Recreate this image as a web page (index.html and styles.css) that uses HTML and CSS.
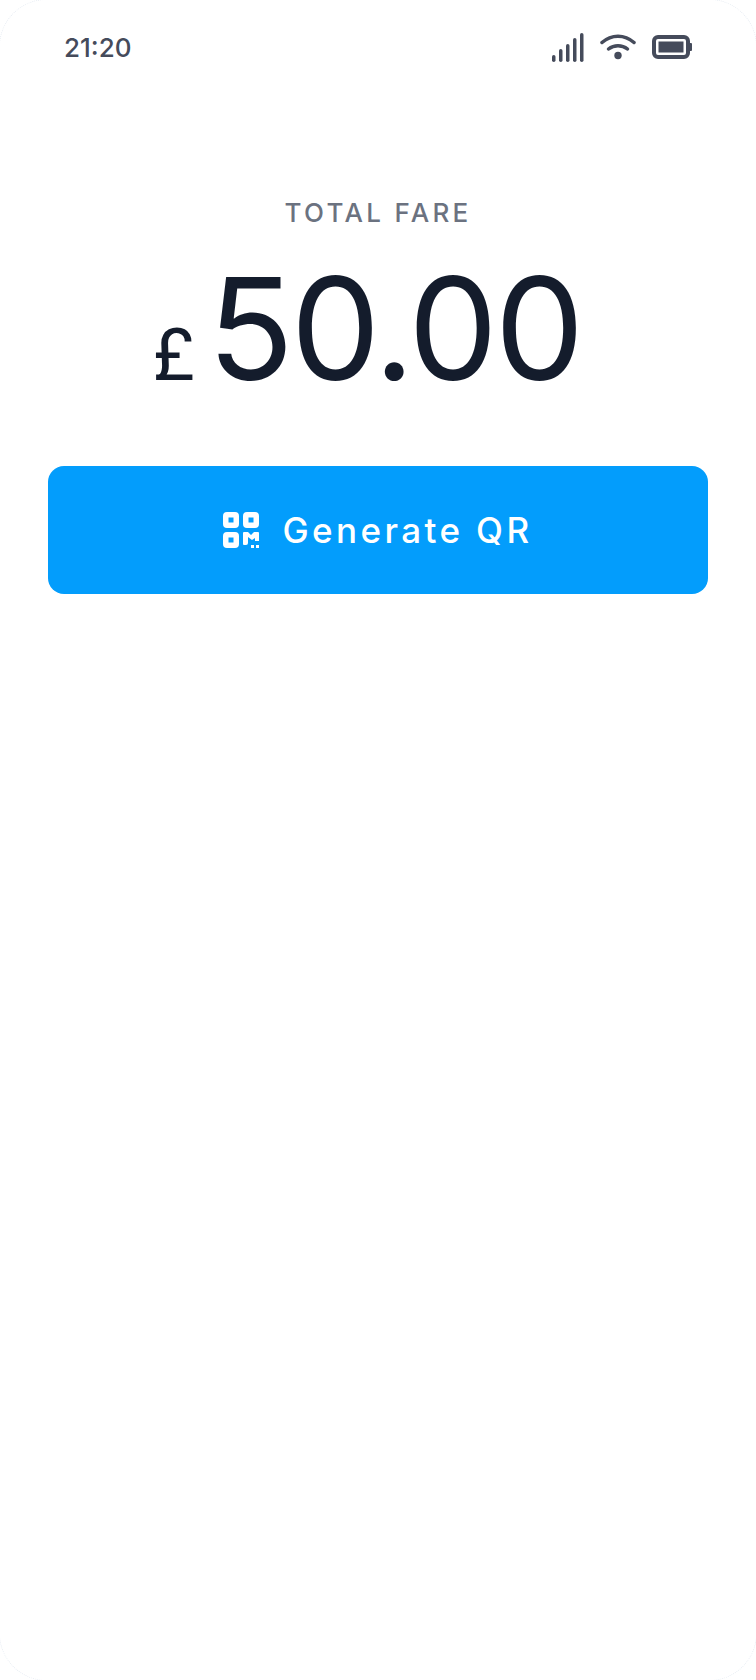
FILE: index.html
```html
<!DOCTYPE html>
<html lang="en">
<head>
  <meta charset="UTF-8" />
  <meta name="viewport" content="width=device-width, initial-scale=1.0"/>
  <title>Total Fare</title>
  <link rel="stylesheet" href="styles.css">
</head>
<body>

  <div class="phone">
    <div class="status-bar">
      <span class="status-time">21:20</span>
      <div class="status-icons">
        <svg class="icon-signal" width="32" height="30" viewBox="0 0 32 30">
          <rect x="0" y="23" width="3.500" height="7" rx="1.750"/>
          <rect x="7" y="17" width="3.500" height="13" rx="1.750"/>
          <rect x="14" y="12" width="3.500" height="18" rx="1.750"/>
          <rect x="21" y="6" width="3.500" height="24" rx="1.750"/>
          <rect x="28" y="1" width="3.500" height="29" rx="1.750"/>
        </svg>
        <svg class="icon-wifi" width="36" height="26" viewBox="0 0 36 26">
          <path d="M2 8.5C11.5 0 24.5 0 34 8.5"/>
          <path d="M8.5 15C14 10.5 22 10.5 27.5 15"/>
          <circle cx="18" cy="21.5" r="3.7"/>
        </svg>
        <svg class="icon-battery" width="40" height="24" viewBox="0 0 40 24">
          <rect x="2" y="2" width="34" height="20" rx="4"/>
          <rect class="battery-level" x="6.5" y="6.5" width="25" height="11"/>
          <path class="battery-tip" d="M37.5 8h1.5a1 1 0 0 1 1 1v6a1 1 0 0 1-1 1h-1.5z"/>
        </svg>
      </div>
    </div>

    <div class="fare">
      <div class="fare-label">TOTAL FARE</div>
      <div class="fare-amount">
        <span class="fare-currency">£</span>
        <span class="fare-value">50.00</span>
      </div>
    </div>

    <button class="qr-button">
      <svg width="36" height="36" viewBox="0 0 36 36">
        <path fill-rule="evenodd" d="M4 0h8a4 4 0 0 1 4 4v8a4 4 0 0 1-4 4H4a4 4 0 0 1-4-4V4a4 4 0 0 1 4-4zm1.5 5.500v5h5v-5z"/>
        <path fill-rule="evenodd" d="M24 0h8a4 4 0 0 1 4 4v8a4 4 0 0 1-4 4h-8a4 4 0 0 1-4-4V4a4 4 0 0 1 4-4zm1.500 5.500v5h5v-5z"/>
        <path fill-rule="evenodd" d="M4 20h8a4 4 0 0 1 4 4v8a4 4 0 0 1-4 4H4a4 4 0 0 1-4-4v-8a4 4 0 0 1 4-4zm1.500 5.500v5h5v-5z"/>
        <path d="M21 20h4l3 3 3-3h4a1 1 0 0 1 1 1v8h-4v-3l-3 2-4-3v6a2 2 0 0 1-2 2h-2a1 1 0 0 1-1-1V21a1 1 0 0 1 1-1z"/>
        <rect x="28" y="33" width="3" height="3"/>
        <rect x="33" y="33" width="3" height="3"/>
      </svg>
      <span>Generate QR</span>
    </button>
  </div>

</body>
</html>
```

FILE: styles.css
```css
body {
  margin: 0;
  padding: 0;
  background: #ffffff;
  font-family: 'Inter', 'Liberation Sans', sans-serif;
  overflow: hidden;
}

/* one px wider than the window so only the dotted corners show */
.phone {
  width: 758px;
  height: 1682px;
  margin: -1px;
  box-sizing: border-box;
  padding: 0 48px;
  border: 1px dotted #e8edf3;
  border-radius: 48px;
}

.status-bar {
  display: flex;
  justify-content: space-between;
  align-items: center;
  height: 94px;
  padding: 0 16px;
}

.status-time {
  font-size: 26px;
  font-weight: 500;
  color: #454b5b;
}

.status-icons {
  display: flex;
  align-items: center;
  gap: 16px;
}

.status-icons svg {
  display: block;
}

.icon-signal rect {
  fill: #454b5b;
}

.icon-wifi path {
  fill: none;
  stroke: #454b5b;
  stroke-width: 3.5;
  stroke-linecap: round;
}

.icon-wifi circle {
  fill: #454b5b;
}

.icon-battery rect {
  fill: none;
  stroke: #454b5b;
  stroke-width: 4;
}

.icon-battery .battery-level {
  fill: #454b5b;
  stroke: none;
}

.battery-tip {
  fill: #454b5b;
}

.fare {
  text-align: center;
  padding-top: 104px;
}

.fare-label {
  font-size: 26px;
  font-weight: 450;
  line-height: 30px;
  letter-spacing: 3.3px;
  color: #6b7280;
}

.fare-amount {
  display: flex;
  justify-content: center;
  align-items: baseline;
  gap: 13px;
  margin-top: 17px;
  padding-right: 22px;
  color: #141c2c;
  line-height: 166px;
}

.fare-currency {
  font-family: 'Roboto', sans-serif;
  font-size: 72px;
}

.fare-value {
  font-size: 142px;
  letter-spacing: -3px;
}

.qr-button {
  display: flex;
  justify-content: center;
  align-items: center;
  gap: 23px;
  width: 100%;
  height: 128px;
  margin-top: 27px;
  background: #039dfc;
  color: #ffffff;
  border: none;
  border-radius: 16px;
  font-family: inherit;
  font-size: 35px;
  font-weight: 500;
  letter-spacing: 3.4px;
  cursor: pointer;
}

.qr-button svg {
  fill: #ffffff;
}
```
